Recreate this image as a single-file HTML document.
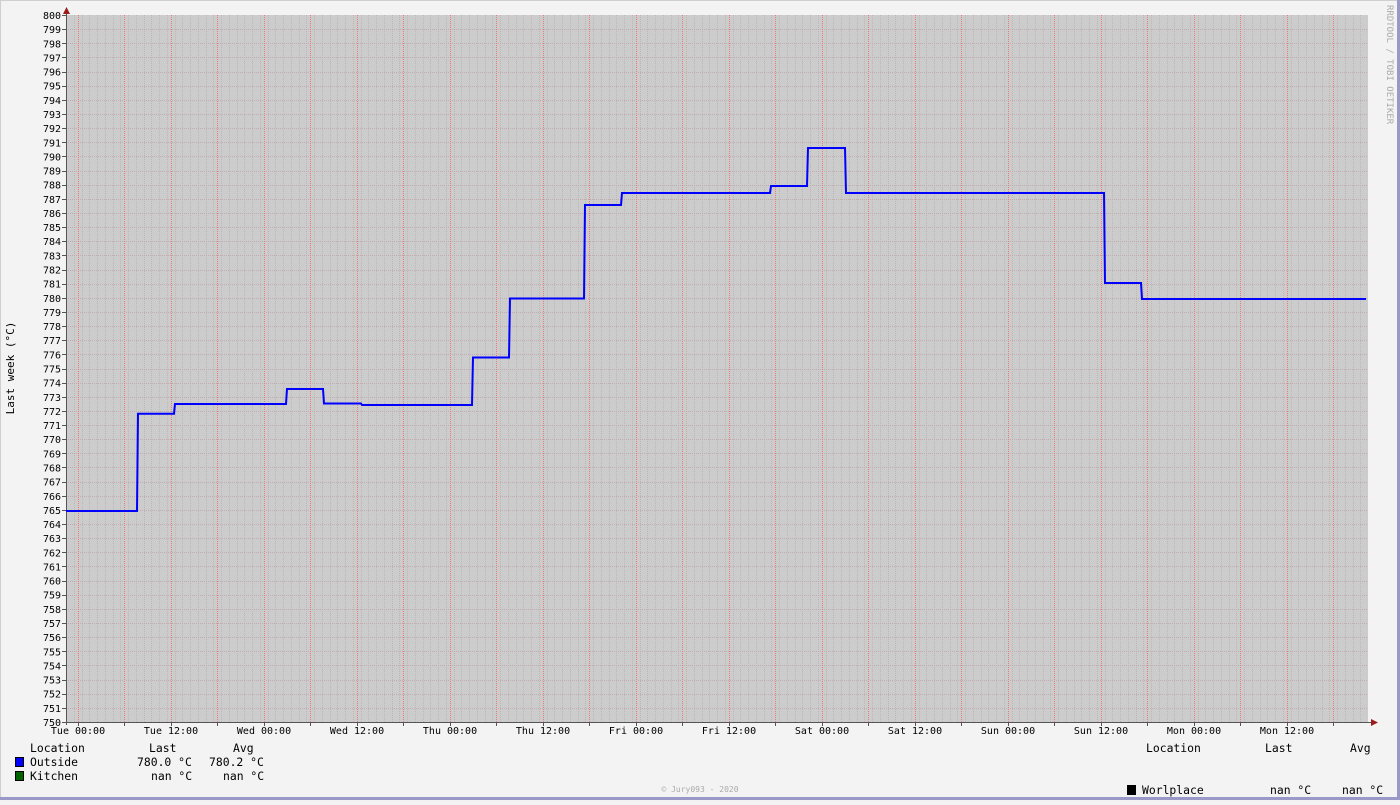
<!DOCTYPE html>
<html><head><meta charset="utf-8"><style>
html,body{margin:0;padding:0;}
body{width:1400px;height:800px;overflow:hidden;background:#f3f3f3;}
svg text{font-family:"DejaVu Sans Mono","Liberation Mono",monospace;}
</style></head><body>
<svg width="1400" height="800" xmlns="http://www.w3.org/2000/svg">
<rect x="0" y="0" width="1400" height="800" fill="#f3f3f3"/>
<line x1="0" y1="0.5" x2="1400" y2="0.5" stroke="#cfcfcf"/>
<line x1="0.5" y1="0" x2="0.5" y2="800" stroke="#cfcfcf"/>
<line x1="1398.5" y1="0" x2="1398.5" y2="800" stroke="#9a98c9" stroke-width="3"/>
<line x1="0" y1="798.5" x2="1400" y2="798.5" stroke="#9a98c9" stroke-width="3"/>
<rect x="66" y="15" width="1302" height="707" fill="#cccccc"/>
<g id="g"></g>
<polyline fill="none" stroke="#0000ff" stroke-width="2" points="66,511 137,511 138,413.7 174,413.7 175,404 286,404 287,389 323,389 324,403.5 361,403.5 362,405 472,405 473,357.5 509,357.5 510,298.5 584,298.5 585,205 621,205 622,193 770,193 771,186 807,186 808,148 845,148 846,193 1104,193 1105,283 1141,283 1142,299 1366,299"/>
<line x1="66.5" y1="10" x2="66.5" y2="725" stroke="#555"/>
<line x1="62" y1="722.5" x2="1372" y2="722.5" stroke="#555"/>
<polygon points="63,14 70,14 66.5,7" fill="#9b1b1b"/>
<polygon points="1371,719 1371,726 1378,722.5" fill="#9b1b1b"/>
<text x="0" y="0" font-size="11" transform="translate(14,368) rotate(-90)" text-anchor="middle">Last week (°C)</text>
<text x="0" y="0" font-size="9" fill="#aaa" transform="translate(1387,5) rotate(90)">RRDTOOL / TOBI OETIKER</text>
<text x="700" y="792" font-size="8" fill="#aaa" text-anchor="middle">© Jury093 - 2020</text>
<g font-size="11.4" fill="#000">
<text x="30" y="752">Location</text><text x="149" y="752">Last</text><text x="233" y="752">Avg</text>
<rect x="15.5" y="757.5" width="8" height="9" fill="#0000ff" stroke="#000"/>
<text x="30" y="766">Outside</text><text x="137" y="766">780.0 °C</text><text x="209" y="766">780.2 °C</text>
<rect x="15.5" y="771.5" width="8" height="9" fill="#006400" stroke="#000"/>
<text x="30" y="780">Kitchen</text><text x="151" y="780">nan °C</text><text x="223" y="780">nan °C</text>
<text x="1146" y="752">Location</text><text x="1265" y="752">Last</text><text x="1350" y="752">Avg</text>
<rect x="1127" y="785" width="9" height="10" fill="#000"/>
<text x="1142" y="794">Worlplace</text><text x="1270" y="794">nan °C</text><text x="1342" y="794">nan °C</text>
</g>
</svg>
<script>
(function(){
var ns="http://www.w3.org/2000/svg",svg=document.querySelector('svg'),g=document.getElementById('g');
var line=document.querySelector('polyline');
function L(x1,y1,x2,y2,c,d){var e=document.createElementNS(ns,'line');e.setAttribute('x1',x1);e.setAttribute('y1',y1);e.setAttribute('x2',x2);e.setAttribute('y2',y2);e.setAttribute('stroke',c);if(d)e.setAttribute('stroke-dasharray',d);g.appendChild(e);}
for(var x=66+7.75;x<1368;x+=7.75){L(Math.round(x)+0.5,15,Math.round(x)+0.5,722,'#b8b8b8','1,1');}
for(var i=1;i<50;i++){var y=Math.round(722-i*14.14)+0.5;L(66,y,1368,y,'#c0acac','1,1');}
for(var x=77.5;x<1368;x+=46.5){var xx=Math.round(x)+0.5;L(xx,15,xx,722,'#cccccc');L(xx,15,xx,722,'#f07878','1,1');L(xx,722,xx,726,'#555');}
for(var v=750;v<=800;v++){var y=722-(v-750)*14.14;var t=document.createElementNS(ns,'text');t.setAttribute('x',61);t.setAttribute('y',y+4);t.setAttribute('font-size','10');t.setAttribute('text-anchor','end');t.textContent=v;svg.appendChild(t);L(62,Math.round(y)+0.5,66,Math.round(y)+0.5,'#555');}
var days=['Tue','Wed','Thu','Fri','Sat','Sun','Mon'];
for(var k=0;k<14;k++){var t=document.createElementNS(ns,'text');t.setAttribute('x',78+k*93);t.setAttribute('y',734);t.setAttribute('font-size','10');t.setAttribute('text-anchor','middle');t.textContent=days[Math.floor(k/2)]+(k%2?' 12:00':' 00:00');svg.appendChild(t);}
svg.appendChild(line);
})();
</script>
</body></html>
